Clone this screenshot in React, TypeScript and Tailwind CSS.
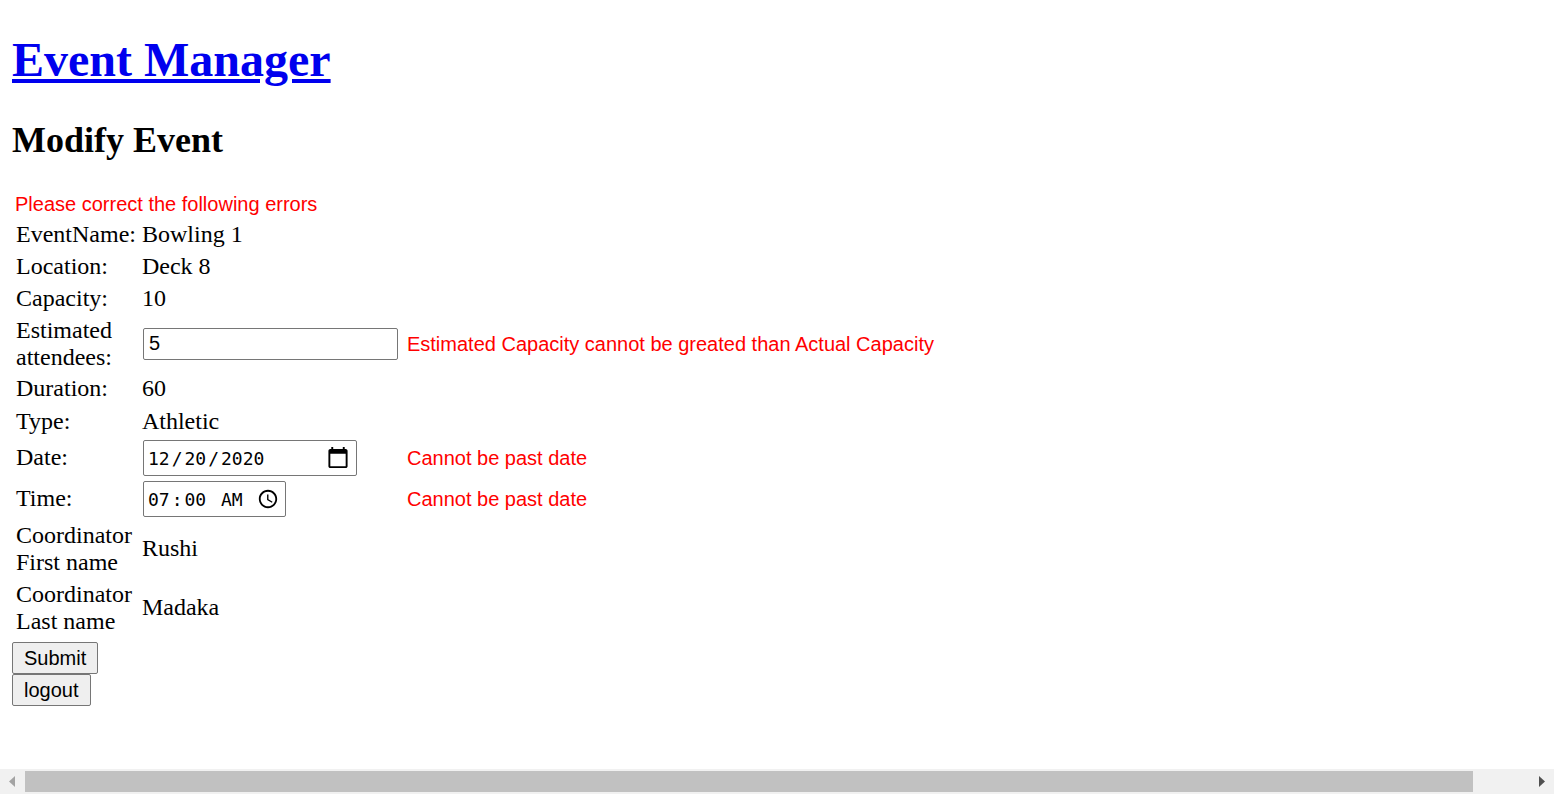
const serif = "font-['Liberation_Serif',serif]";

function Label({ children, up }: { children: React.ReactNode; up?: boolean }) {
  return <td className={up ? "pl-[2px] pr-[3px] pt-[1px] pb-[2px] align-middle" : "pl-[2px] pr-[3px] py-[1.5px] align-middle"}>{children}</td>;
}
function Value({ children, up }: { children?: React.ReactNode; up?: boolean }) {
  return <td className={up ? "px-[1px] pt-[1px] pb-[2px] align-middle" : "px-[1px] py-[1.5px] align-middle"}>{children}</td>;
}
function Err({ children, shift }: { children?: React.ReactNode; shift?: boolean }) {
  return (
    <td className={`${shift ? "pt-[2.5px] pb-[0.5px]" : "py-[1.5px]"} pl-[6px] align-middle font-['Liberation_Sans',sans-serif] text-[20px] text-[#ff0000] whitespace-nowrap`}>
      {children}
    </td>
  );
}

const inputBase = "ml-[1px] border border-[#767676] rounded-[2px] bg-white text-black align-middle";
const dateBase =
  "block h-[36px] pl-[2px] pr-[6px] font-['DejaVu_Sans_Mono',monospace] text-[18px] [&::-webkit-datetime-edit]:pt-[1px] [&::-webkit-datetime-edit-month-field]:px-[2px] [&::-webkit-datetime-edit-day-field]:px-[2px] [&::-webkit-datetime-edit-year-field]:px-[2px] [&::-webkit-datetime-edit-hour-field]:px-[2px] [&::-webkit-datetime-edit-minute-field]:px-[2px] [&::-webkit-datetime-edit-ampm-field]:px-[2px] [&::-webkit-calendar-picker-indicator]:ml-0 [&::-webkit-calendar-picker-indicator]:mr-0 [&::-webkit-calendar-picker-indicator]:mb-0 [&::-webkit-calendar-picker-indicator]:mt-[1px] [&::-webkit-calendar-picker-indicator]:p-0";

export default function App() {
  return (
    <div className={`${serif} min-h-[794px] bg-white text-black text-[24px] leading-[27px] pl-[12px] pt-[32px] overflow-hidden`}>
      <h1 className="text-[48px] leading-[55px] font-bold">
        <a href="#" className="text-[#0000ee] underline">Event Manager</a>
      </h1>
      <h2 className="text-[36px] leading-[41px] font-bold mt-[33px]">Modify Event</h2>
      <form className="mt-[32px]">
        <div className="pl-[3px] font-['Liberation_Sans',sans-serif] text-[20px] leading-[23px] text-[#ff0000]">
          Please correct the following errors
        </div>
        <table className="border-separate border-spacing-[2px] mt-[1px]">
          <tbody>
            <tr><Label>EventName:</Label><Value>Bowling 1</Value><Err /></tr>
            <tr><Label>Location:</Label><Value>Deck 8</Value><Err /></tr>
            <tr><Label>Capacity:</Label><Value>10</Value><Err /></tr>
            <tr>
              <Label>Estimated<br />attendees:</Label>
              <Value>
                <input
                  type="text"
                  defaultValue="5"
                  className={`${inputBase} block w-[255px] h-[32px] px-[5px] font-['Liberation_Sans',sans-serif] text-[20px]`}
                />
              </Value>
              <Err shift>Estimated Capacity cannot be greated than Actual Capacity</Err>
            </tr>
            <tr><Label up>Duration:</Label><Value up>60</Value><Err /></tr>
            <tr><Label>Type:</Label><Value>Athletic</Value><Err /></tr>
            <tr>
              <Label>Date:</Label>
              <Value>
                <input type="date" defaultValue="2020-12-20" className={`${inputBase} ${dateBase} w-[214px] [&::-webkit-calendar-picker-indicator]:w-[24px] [&::-webkit-calendar-picker-indicator]:h-[24px]`} />
              </Value>
              <Err shift>Cannot be past date</Err>
            </tr>
            <tr>
              <Label>Time:</Label>
              <Value>
                <input type="time" defaultValue="07:00" className={`${inputBase} ${dateBase} w-[143px] [&::-webkit-calendar-picker-indicator]:w-[22px] [&::-webkit-calendar-picker-indicator]:h-[22px]`} />
              </Value>
              <Err shift>Cannot be past date</Err>
            </tr>
            <tr><Label>Coordinator<br />First name</Label><Value>Rushi</Value><Err /></tr>
            <tr><Label>Coordinator<br />Last name</Label><Value>Madaka</Value><Err /></tr>
          </tbody>
        </table>
        <div className="font-['Liberation_Sans',sans-serif] text-[20px] flex flex-col items-start mt-[4px]">
          <button type="button" className="h-[32px] px-[11px] bg-[#efefef] border border-[#767676] rounded-[2px] text-black leading-[23px]">Submit</button>
          <button type="button" className="h-[32px] px-[11px] bg-[#efefef] border border-[#767676] rounded-[2px] text-black leading-[23px]">logout</button>
        </div>
      </form>

      <div className="fixed left-0 right-0 bottom-0 h-[25px] bg-[#f1f1f1] flex items-center">
        <svg width="25" height="25" viewBox="0 0 25 25" className="shrink-0">
          <path d="M9 12.5 L15 7 V18 Z" fill="#a3a3a3" />
        </svg>
        <div className="w-[1448px] h-[21px] bg-[#c1c1c1]" />
        <div className="flex-1" />
        <svg width="25" height="25" viewBox="0 0 25 25" className="shrink-0">
          <path d="M16 12.5 L10 7 V18 Z" fill="#505050" />
        </svg>
      </div>
    </div>
  );
}
